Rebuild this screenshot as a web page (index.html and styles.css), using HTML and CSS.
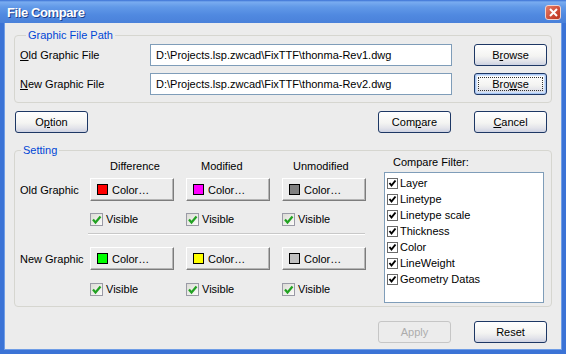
FILE: index.html
```html
<!DOCTYPE html>
<html lang="en">
<head>
  <meta charset="UTF-8" />
  <title>File Compare</title>
  <link rel="stylesheet" href="styles.css">
</head>
<body>

  <div class="window">
    <div class="titlebar">
      <span class="title">File Compare</span>
      <span class="close-btn">
        <svg width="9" height="9" viewBox="0 0 9 9"><path d="M1 1L8 8M8 1L1 8" stroke="#fff" stroke-width="2" fill="none"/></svg>
      </span>
    </div>

    <div class="client">
      <!-- file paths -->
      <div class="group path-group">
        <div class="group-title">Graphic File Path</div>
        <div class="file-row">
          <span class="field-label"><u>O</u>ld Graphic File</span>
          <div class="textbox">D:\Projects.lsp.zwcad\FixTTF\thonma-Rev1.dwg</div>
          <button class="btn">B<u>r</u>owse</button>
        </div>
        <div class="file-row second">
          <span class="field-label"><u>N</u>ew Graphic File</span>
          <div class="textbox">D:\Projects.lsp.zwcad\FixTTF\thonma-Rev2.dwg</div>
          <button class="btn focused"><span class="focus-ring">Bro<u>w</u>se</span></button>
        </div>
      </div>

      <div class="action-row">
        <button class="btn option-btn">O<u>p</u>tion</button>
        <button class="btn compare-btn">Com<u>p</u>are</button>
        <button class="btn"><u>C</u>ancel</button>
      </div>

      <!-- settings -->
      <div class="group setting-group">
        <div class="group-title">Setting</div>
        <div class="setting-body">
          <div class="setting-grid">
            <div class="grid-row hdr-row">
              <span></span>
              <span class="col-hdr hdr-diff">Difference</span>
              <span class="col-hdr hdr-mod">Modified</span>
              <span class="col-hdr hdr-unmod">Unmodified</span>
            </div>

            <div class="grid-row color-row first">
              <span class="row-label">Old Graphic</span>
              <button class="color-btn"><span class="swatch red"></span>Color…</button>
              <button class="color-btn"><span class="swatch magenta"></span>Color…</button>
              <button class="color-btn"><span class="swatch gray"></span>Color…</button>
            </div>
            <div class="grid-row visible-row first">
              <span></span>
              <label class="xp-check"><span class="box"><svg width="11" height="11" viewBox="0 0 11 11"><path d="M2 5.5L4.5 8.5L9.5 2.5" stroke="#21a121" stroke-width="2.2" fill="none"/></svg></span>Visible</label>
              <label class="xp-check"><span class="box"><svg width="11" height="11" viewBox="0 0 11 11"><path d="M2 5.5L4.5 8.5L9.5 2.5" stroke="#21a121" stroke-width="2.2" fill="none"/></svg></span>Visible</label>
              <label class="xp-check"><span class="box"><svg width="11" height="11" viewBox="0 0 11 11"><path d="M2 5.5L4.5 8.5L9.5 2.5" stroke="#21a121" stroke-width="2.2" fill="none"/></svg></span>Visible</label>
            </div>

            <div class="separator"></div>

            <div class="grid-row color-row second">
              <span class="row-label">New Graphic</span>
              <button class="color-btn"><span class="swatch green"></span>Color…</button>
              <button class="color-btn"><span class="swatch yellow"></span>Color…</button>
              <button class="color-btn"><span class="swatch silver"></span>Color…</button>
            </div>
            <div class="grid-row visible-row second">
              <span></span>
              <label class="xp-check"><span class="box"><svg width="11" height="11" viewBox="0 0 11 11"><path d="M2 5.5L4.5 8.5L9.5 2.5" stroke="#21a121" stroke-width="2.2" fill="none"/></svg></span>Visible</label>
              <label class="xp-check"><span class="box"><svg width="11" height="11" viewBox="0 0 11 11"><path d="M2 5.5L4.5 8.5L9.5 2.5" stroke="#21a121" stroke-width="2.2" fill="none"/></svg></span>Visible</label>
              <label class="xp-check"><span class="box"><svg width="11" height="11" viewBox="0 0 11 11"><path d="M2 5.5L4.5 8.5L9.5 2.5" stroke="#21a121" stroke-width="2.2" fill="none"/></svg></span>Visible</label>
            </div>
          </div>

          <div class="filter">
            <div class="filter-title">Compare Filter:</div>
            <ul class="filter-list">
              <li><span class="mini-box"><svg width="9" height="9" viewBox="0 0 9 9"><path d="M1.5 4L3.5 6.5L7.5 1.5" stroke="#000" stroke-width="2" fill="none"/></svg></span>Layer</li>
              <li><span class="mini-box"><svg width="9" height="9" viewBox="0 0 9 9"><path d="M1.5 4L3.5 6.5L7.5 1.5" stroke="#000" stroke-width="2" fill="none"/></svg></span>Linetype</li>
              <li><span class="mini-box"><svg width="9" height="9" viewBox="0 0 9 9"><path d="M1.5 4L3.5 6.5L7.5 1.5" stroke="#000" stroke-width="2" fill="none"/></svg></span>Linetype scale</li>
              <li><span class="mini-box"><svg width="9" height="9" viewBox="0 0 9 9"><path d="M1.5 4L3.5 6.5L7.5 1.5" stroke="#000" stroke-width="2" fill="none"/></svg></span>Thickness</li>
              <li><span class="mini-box"><svg width="9" height="9" viewBox="0 0 9 9"><path d="M1.5 4L3.5 6.5L7.5 1.5" stroke="#000" stroke-width="2" fill="none"/></svg></span>Color</li>
              <li><span class="mini-box"><svg width="9" height="9" viewBox="0 0 9 9"><path d="M1.5 4L3.5 6.5L7.5 1.5" stroke="#000" stroke-width="2" fill="none"/></svg></span>LineWeight</li>
              <li><span class="mini-box"><svg width="9" height="9" viewBox="0 0 9 9"><path d="M1.5 4L3.5 6.5L7.5 1.5" stroke="#000" stroke-width="2" fill="none"/></svg></span>Geometry Datas</li>
            </ul>
          </div>
        </div>
      </div>

      <div class="footer">
        <button class="btn disabled">Apply</button>
        <button class="btn">Reset</button>
      </div>
    </div>
  </div>

</body>
</html>
```

FILE: styles.css
```css
body {
  margin: 0;
  font-family: "Liberation Sans", Arial, sans-serif;
  font-size: 11px;
  color: #000;
  background: #fff;
}

.window {
  width: 566px;
  height: 354px;
  display: flex;
  flex-direction: column;
}

/* XP style title bar */
.titlebar {
  height: 23px;
  flex: none;
  display: flex;
  align-items: center;
  justify-content: space-between;
  padding: 2px 5px 0 7px;
  box-sizing: border-box;
  background: linear-gradient(to bottom, #3a70d4 0px, #79acf0 2px, #6199e8 7px, #5089e0 15px, #4a81da 23px);
}

.title {
  color: #fff;
  font-weight: bold;
  font-size: 13px;
  letter-spacing: -0.4px;
  text-shadow: 1px 1px 0 #1d3f8a;
}

.close-btn {
  width: 16px;
  height: 15px;
  box-sizing: border-box;
  border: 1px solid #f3d2cb;
  border-radius: 3px;
  background: linear-gradient(135deg, #e57d68, #c9432f 70%, #b8381f);
  display: flex;
  align-items: center;
  justify-content: center;
}

.client {
  flex: 1;
  background: #ececec;
  border: 4px solid #3b73d6;
  border-top: none;
  box-shadow: inset 1px 0 0 #6f9de6, inset -1px 0 0 #6f9de6, inset 0 -1px 0 #6f9de6;
  padding: 0 10px;
}

/* group boxes */
.group {
  border: 1px solid #d6d6d0;
  border-radius: 4px;
}

.group-title {
  width: fit-content;
  height: 13px;
  line-height: 13px;
  margin: -7px 0 -6px 6px;
  padding: 0 2px;
  background: #ececec;
  color: #0046d5;
}

.path-group {
  margin-top: 12px;
  padding: 0 4px 7px 5px;
}

.file-row {
  display: flex;
  align-items: center;
  margin-top: 8px;
  height: 22px;
}

.file-row.second {
  margin-top: 7px;
}

.field-label {
  width: 130px;
}

.textbox {
  width: 302px;
  height: 22px;
  box-sizing: border-box;
  border: 1px solid #7f9db9;
  background: #fff;
  padding: 0 5px;
  line-height: 20px;
  margin-right: 22px;
}

/* buttons */
.btn {
  width: 73px;
  height: 22px;
  padding: 0;
  font-family: inherit;
  font-size: 11px;
  color: #000;
  border: 1px solid #1d3764;
  border-radius: 3px;
  background: linear-gradient(to bottom, #ffffff 0%, #f4f4f2 55%, #e3e4ea 80%, #cdd2e2 100%);
}

.btn.focused {
  box-shadow: inset 0 0 0 1px #a9c6f2, inset 0 0 0 2px #cde0fa;
  padding: 3px;
}

.focus-ring {
  display: block;
  height: 100%;
  box-sizing: border-box;
  border: 1px dotted #333;
  line-height: 12px;
}

.btn.disabled {
  color: #acacac;
  border-color: #c6c6c6;
  background: #ececec;
}

.action-row {
  display: flex;
  margin-top: 8px;
  padding-right: 5px;
}

.option-btn {
  margin-left: 1px;
}

.compare-btn {
  margin-left: auto;
  margin-right: 23px;
}

.setting-group {
  margin-top: 17px;
}

.setting-body {
  display: flex;
  align-items: flex-start;
  padding: 0 7px 0 5px;
}

.setting-grid {
  width: 346px;
  padding-bottom: 9px;
}

.grid-row {
  display: grid;
  grid-template-columns: 58px 84px 84px 84px;
  column-gap: 12px;
  align-items: center;
}

.row-label {
  white-space: nowrap;
}

.hdr-row {
  margin-top: 8px;
  height: 14px;
}

.hdr-diff { padding-left: 20px; }
.hdr-mod { padding-left: 15px; }
.hdr-unmod { padding-left: 11px; }

.color-row {
  height: 23px;
}

.color-row.first { margin-top: 5px; }
.color-row.second { margin-top: 12px; }

.color-btn {
  height: 23px;
  display: flex;
  align-items: center;
  padding: 0 0 0 6px;
  font-family: inherit;
  font-size: 11px;
  color: #000;
  background: #ececec;
  border: 1px solid;
  border-color: #fff #7c7c7c #7c7c7c #fff;
  box-shadow: inset -1px -1px 0 #b5b5b5;
}

.swatch {
  width: 11px;
  height: 11px;
  box-sizing: border-box;
  border: 1px solid #000;
  margin-right: 4px;
}

.swatch.red { background: #ff0000; }
.swatch.magenta { background: #ff00ff; }
.swatch.gray { background: #808080; }
.swatch.green { background: #00ff00; }
.swatch.yellow { background: #ffff00; }
.swatch.silver { background: #c0c0c0; }

.visible-row {
  height: 16px;
}

.visible-row.first { margin-top: 10px; }
.visible-row.second { margin-top: 11px; }

.xp-check {
  display: flex;
  align-items: center;
}

.xp-check .box {
  width: 13px;
  height: 13px;
  box-sizing: border-box;
  border: 1px solid #9a9aa6;
  background: linear-gradient(135deg, #dcdcd6, #fbfbf9);
  margin-right: 3px;
  display: flex;
  align-items: center;
  justify-content: center;
}

.separator {
  margin: 6px 0 0 68px;
  width: 277px;
  height: 1px;
  background: #c8c8c8;
  border-bottom: 1px solid #fff;
}

/* compare filter list */
.filter {
  margin-left: 18px;
  width: 160px;
}

.filter-title {
  height: 14px;
  line-height: 14px;
  margin-top: 4px;
  padding-left: 9px;
}

.filter-list {
  list-style: none;
  margin: 3px 0 0;
  padding: 2px 0 0 2px;
  height: 131px;
  box-sizing: border-box;
  border: 1px solid #7f9db9;
  background: #fff;
}

.filter-list li {
  height: 16px;
  display: flex;
  align-items: center;
}

.mini-box {
  width: 11px;
  height: 11px;
  box-sizing: border-box;
  border: 1px solid #6a6a6a;
  margin-right: 2px;
  display: flex;
  align-items: center;
  justify-content: center;
}

.footer {
  display: flex;
  justify-content: flex-end;
  gap: 23px;
  margin-top: 14px;
  padding-right: 5px;
}
```
